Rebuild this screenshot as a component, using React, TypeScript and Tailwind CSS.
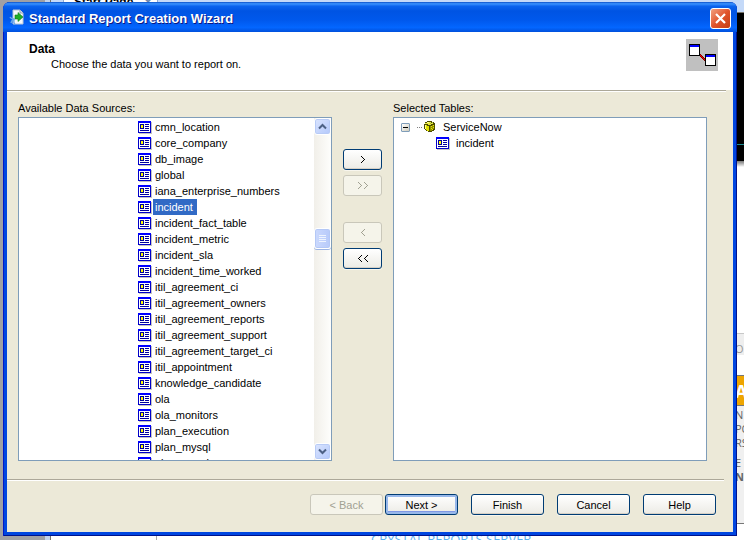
import React from "react";

const tables: string[] = [
  "cmn_location",
  "core_company",
  "db_image",
  "global",
  "iana_enterprise_numbers",
  "incident",
  "incident_fact_table",
  "incident_metric",
  "incident_sla",
  "incident_time_worked",
  "itil_agreement_ci",
  "itil_agreement_owners",
  "itil_agreement_reports",
  "itil_agreement_support",
  "itil_agreement_target_ci",
  "itil_appointment",
  "knowledge_candidate",
  "ola",
  "ola_monitors",
  "plan_execution",
  "plan_mysql",
  "plan_people",
];

function TableIcon() {
  return (
    <svg width="14" height="13" viewBox="0 0 14 13" shapeRendering="crispEdges" className="shrink-0" aria-hidden="true">
      <path d="M1 1h13v12H1z" fill="#c4c4c4" />
      <path d="M0 0h13v12H0z" fill="#0000c8" />
      <path d="M0 0h13v2H0z" fill="#0000ff" />
      <path d="M1 2h11v9H1z" fill="#fff" />
      <path d="M2 3h4v5H2zM7 3h4v1H7zM7 5h4v1H7zM7 7h4v1H7zM2 9h9v1H2z" fill="#00009c" />
      <path d="M3 4h2v3H3z" fill="#ffff00" />
    </svg>
  );
}

function DatabaseIcon() {
  return (
    <svg width="12" height="12" viewBox="0 0 12 12" shapeRendering="crispEdges" className="shrink-0" aria-hidden="true">
      <path d="M3 0h5v1h2v1h1v7h-1v1H8v1H4v-1H2V9H1V8H0V3h1V1h2z" fill="#4c4c00" />
      <path d="M3 1h4v1h2v1H7v1H4V3H1V2h2z" fill="#e8e840" />
      <path d="M1 4h2v1h2v5H3V9H2V8H1z" fill="#e0e000" />
      <path d="M1 4h1v4H1zM3 1h2v1H3z" fill="#ffff90" />
      <path d="M6 5h2V4h2v4H8v2H6z" fill="#909000" />
      <path d="M7 5h1v1H7zM9 4h1v1H9zM7 7h1v1H7zM9 6h1v1H9zM8 8h1v1H8z" fill="#e8e800" />
      <path d="M8 1h1v1H8zM6 2h1v1H6z" fill="#a8c040" />
    </svg>
  );
}

function ReportIcon() {
  return (
    <svg width="16" height="16" viewBox="0 0 16 16" className="shrink-0" aria-hidden="true">
      <path d="M4 1h7l3 3v11H4z" fill="#f6f8fb" stroke="#b9c6d8" />
      <path d="M11 1v3h3" fill="#dce6f2" stroke="#8c9cb4" />
      <path d="M6 6h3V3.500l5 4.500-5 4.500V10H6z" fill="#1fae2a" stroke="#0f7d1a" strokeWidth=".6" />
      <path d="M1 8c1 2 2 2 4 2M2 14c1-3 2-4 4-4M5 10c0 2-1 4 1 5" fill="none" stroke="#68a8e8" strokeWidth="1.500" />
    </svg>
  );
}

function LinkedTablesIcon() {
  return (
    <svg width="32" height="32" viewBox="0 0 32 32" shapeRendering="crispEdges" className="shrink-0" aria-hidden="true">
      <path d="M0 0h32v32H0z" fill="#c0c0c0" />
      <path d="M13 15h2v1h1v1h1v1h1v1h1v3h-1v-1h-1v-1h-1v-1h-1v-1h-1v-1h-1z" fill="#800000" />
      <path d="M14 16h1v1h1v1h1v1h1v1h1v1h-1v-1h-1v-1h-1v-1h-1v-1h-1z" fill="#f00000" />
      <path d="M3 5h11v12H3zM19 15h11v12H19z" fill="#000" />
      <path d="M4 6h9v10H4zM20 16h9v10H20z" fill="#fff" />
      <path d="M4 6h9v2H4zM20 16h9v2H20z" fill="#0000ff" />
    </svg>
  );
}

function ScrollButton({ up }: { up: boolean }) {
  return (
    <button
      type="button"
      aria-label={up ? "Scroll up" : "Scroll down"}
      className="flex h-[17px] w-[17px] items-center justify-center rounded-[3px] border border-white bg-gradient-to-br from-[#dbe5fe] to-[#b3c8fb] shadow-[inset_0_0_0_1px_#b8cbf6]"
    >
      <svg width="9" height="7" viewBox="0 0 9 7" fill="none" stroke="#4d6185" strokeWidth="2" aria-hidden="true">
        <path d={up ? "M1 5.500 4.500 2 8 5.500" : "M1 1.500 4.500 5 8 1.500"} />
      </svg>
    </button>
  );
}

function ScrollBar() {
  return (
    <div className="flex w-[17px] shrink-0 flex-col bg-gradient-to-r from-[#f1efe9] to-[#fefefc]">
      <ScrollButton up />
      <div className="flex min-h-0 flex-1 flex-col">
        <div className="grow-[93]" />
        <div className="flex h-[21px] shrink-0 flex-col items-center justify-center gap-px rounded-[3px] border border-white bg-gradient-to-r from-[#cbd9fd] to-[#b7cafa] shadow-[inset_0_0_0_1px_#b4c8f6,0_1px_0_#9cb4e4]">
          <span className="h-px w-[7px] bg-[#eef4fe]" />
          <span className="h-px w-[7px] bg-[#eef4fe]" />
          <span className="h-px w-[7px] bg-[#eef4fe]" />
          <span className="h-px w-[7px] bg-[#eef4fe]" />
        </div>
        <div className="grow-[194]" />
      </div>
      <ScrollButton up={false} />
    </div>
  );
}

type ButtonProps = {
  children: React.ReactNode;
  label?: string;
  disabled?: boolean;
  focused?: boolean;
  narrow?: boolean;
};

function XpButton({ children, label, disabled, focused, narrow }: ButtonProps) {
  const width = narrow ? "w-[39px]" : "w-[73px]";
  const look = disabled
    ? "border-[#c9c7ba] bg-[#f5f4ea] text-[#a1a192]"
    : focused
      ? "border-[#003c74] bg-gradient-to-b from-white to-[#ecebe5] text-black shadow-[inset_0_0_0_2px_#98b8ea,inset_0_-3px_0_#8098e4]"
      : "border-[#003c74] bg-gradient-to-b from-white to-[#ecebe5] text-black shadow-[inset_0_-1px_0_#d6d0c5,0_1px_0_#f8f6ee]";
  return (
    <button
      type="button"
      disabled={disabled}
      aria-label={label}
      className={`flex h-[21px] shrink-0 items-center justify-center rounded-[3px] border leading-4 ${width} ${look}`}
    >
      {children}
    </button>
  );
}

function Chevrons({ left, double }: { left?: boolean; double?: boolean }) {
  const single = left ? "M4 0h1v1H4zM3 1h1v1H3zM2 2h1v1H2zM1 3h1v1H1zM2 4h1v1H2zM3 5h1v1H3zM4 6h1v1H4z" : "M1 0h1v1H1zM2 1h1v1H2zM3 2h1v1H3zM4 3h1v1H4zM3 4h1v1H3zM2 5h1v1H2zM1 6h1v1H1z";
  return (
    <svg width={double ? 12 : 6} height="7" fill="currentColor" shapeRendering="crispEdges" aria-hidden="true">
      <path d={single} />
      {double && <path d={single} transform="translate(6 0)" />}
    </svg>
  );
}

function Backdrop() {
  return (
    <div aria-hidden="true" className="absolute inset-0 flex overflow-hidden bg-white">
      <div className="w-[45px] shrink-0 bg-[#a0a0a4]" />
      <div className="w-[6px] shrink-0 border-r border-[#77756c] bg-[#c3d3ea]" />
      <div className="flex min-w-0 flex-1 flex-col justify-between">
        <div className="flex h-3 overflow-hidden bg-[#c4d9f8]">
          <div className="ml-3 flex w-[95px] items-center justify-between border-x border-[#8ea9cf] bg-white pr-1 pl-[10px] font-['Liberation_Sans'] text-[12px] font-bold leading-[4px] text-black">
            <span className="-mt-[8px] whitespace-nowrap">Start Page</span>
            <span className="-mt-[8px] text-[#6d88ad]">✕</span>
          </div>
        </div>
        <div className="flex h-[5px] items-start">
          <div className="h-full w-[106px] shrink-0 border-r border-[#a8a8a8]" />
          <div className="ml-[214px] whitespace-nowrap font-['Open_Sans'] text-[13px] leading-[8px] text-[#5aaef0]">CRYSTAL REPORTS SERVER</div>
        </div>
      </div>
      <div className="flex w-[9px] shrink-0 flex-col overflow-hidden whitespace-nowrap font-['Open_Sans'] text-[11px] text-[#666]">
        <div className="h-3 shrink-0 bg-[#c4d9f8]" />
        <div className="h-[132px] shrink-0 border-t border-[#77756c] bg-black" />
        <div className="h-[17px] shrink-0 border-t border-[#1d8c94] bg-black" />
        <div className="h-[6px] shrink-0 bg-gradient-to-b from-[#777] to-white" />
        <div className="h-[166px] shrink-0 bg-white" />
        <div className="h-[22px] shrink-0 border-t border-[#c8c8c8] bg-[#eee] leading-[30px] text-[#999]">O</div>
        <div className="h-5 shrink-0 bg-white" />
        <div className="h-[31px] shrink-0 border-y border-[#777] bg-[#eea500] text-[18px] font-bold leading-[30px] text-white">A</div>
        <div className="flex-1 border-b border-[#777] bg-[#f0f0f0] leading-[14px]">
          <div className="mt-[2px]">N</div>
          <div>PO</div>
          <div>RS</div>
          <div className="mt-[6px]">E</div>
          <div className="font-bold">N</div>
        </div>
        <div className="h-4 shrink-0 bg-white" />
      </div>
    </div>
  );
}

export default function App() {
  return (
    <div className="relative flex h-screen min-h-[480px] overflow-hidden font-['Liberation_Sans',Arial,sans-serif] text-[11px] leading-4 text-black">
      <Backdrop />
      <section
        aria-label="Standard Report Creation Wizard"
        className="relative mt-[2px] mr-[7px] mb-[4px] ml-[3px] flex min-w-0 flex-1 flex-col rounded-t-[7px] bg-[#0046e0] px-1 pb-1 shadow-[inset_1px_0_0_#0019c8,inset_-1px_-1px_0_#00138c]"
      >
        <header className="-mx-1 flex h-[30px] shrink-0 items-center gap-1 rounded-t-[7px] bg-[linear-gradient(to_bottom,#0a50c8_0%,#3a93ff_6%,#0a63ee_14%,#0054e3_30%,#0058ec_60%,#0366ff_85%,#0050dc_100%)] pr-[6px] pl-[6px]">
          <ReportIcon />
          <h1 className="mt-[3px] flex-1 whitespace-nowrap text-[13px] font-bold leading-5 text-white [text-shadow:1px_1px_0_#0a1883]">
            Standard Report Creation Wizard
          </h1>
          <button
            type="button"
            aria-label="Close"
            className="mt-[3px] flex h-[21px] w-[21px] items-center justify-center rounded-[3px] border border-white bg-gradient-to-br from-[#f0a080] via-[#e0542c] to-[#c43c10]"
          >
            <svg width="11" height="11" viewBox="0 0 11 11" stroke="#fff" strokeWidth="2.200" aria-hidden="true">
              <path d="M1 1l9 9M10 1l-9 9" />
            </svg>
          </button>
        </header>

        <div className="flex h-[58px] shrink-0 items-start justify-between bg-white pt-[7px] pr-[15px] pl-[22px]">
          <div className="pt-[2px]">
            <h2 className="font-bold leading-4 text-[12px]">Data</h2>
            <p className="pl-[22px] leading-[14px]">Choose the data you want to report on.</p>
          </div>
          <LinkedTablesIcon />
        </div>

        <div className="flex min-h-0 flex-1 flex-col bg-[#ece9d8]">
          <div className="mr-[7px] h-[2px] shrink-0 border-t border-[#aca899] bg-white" />

          <div className="flex min-h-0 flex-1 pt-2 pr-[26px] pb-[18px] pl-[11px]">
            <div className="flex min-h-0 min-w-0 flex-1 flex-col gap-px">
              <h3 id="available">Available Data Sources:</h3>
              <div className="flex min-h-0 flex-1 border border-[#7f9db9] bg-white">
                <ul aria-labelledby="available" className="min-h-0 min-w-0 flex-1 overflow-hidden pt-px pl-[119px]">
                  {tables.map((name) => (
                    <li key={name} className="flex h-4 items-center gap-px whitespace-nowrap">
                      <TableIcon />
                      <span className={name === "incident" ? "bg-[#316ac5] pr-1 pl-[2px] text-white" : "pl-[2px]"}>{name}</span>
                    </li>
                  ))}
                </ul>
                <ScrollBar />
              </div>
            </div>

            <div className="flex w-[61px] shrink-0 flex-col items-center gap-[5px] pt-[49px]">
              <XpButton narrow label="Add">
                <Chevrons />
              </XpButton>
              <XpButton narrow disabled label="Add all">
                <Chevrons double />
              </XpButton>
              <div className="mt-[21px]">
                <XpButton narrow disabled label="Remove">
                  <Chevrons left />
                </XpButton>
              </div>
              <XpButton narrow label="Remove all">
                <Chevrons left double />
              </XpButton>
            </div>

            <div className="flex min-h-0 min-w-0 flex-1 flex-col gap-px">
              <h3 id="selected">Selected Tables:</h3>
              <ul aria-labelledby="selected" className="min-h-0 flex-1 overflow-hidden border border-[#7f9db9] bg-white pt-px pl-[7px]">
                <li>
                  <div className="flex h-4 items-center">
                    <button
                      type="button"
                      aria-label="Collapse"
                      className="flex h-[9px] w-[9px] items-center justify-center rounded-[1px] border border-[#7f9db9] bg-gradient-to-br from-white to-[#d0ccbc]"
                    >
                      <span className="h-px w-[5px] bg-black" />
                    </button>
                    <span className="mr-[2px] ml-[7px] w-[5px] border-t border-dotted border-[#808080]" />
                    <DatabaseIcon />
                    <span className="pl-[7px]">ServiceNow</span>
                  </div>
                  <ul>
                    <li className="flex h-4 items-center gap-[6px] pl-[35px]">
                      <TableIcon />
                      <span>incident</span>
                    </li>
                  </ul>
                </li>
              </ul>
            </div>
          </div>

          <div className="mr-[9px] h-[2px] shrink-0 border-t border-[#aca899] bg-white" />
          <footer className="flex shrink-0 justify-end gap-[13px] pt-[13px] pr-[17px] pb-[17px]">
            <div className="flex gap-[2px]">
              <XpButton disabled>&lt; Back</XpButton>
              <XpButton focused>Next &gt;</XpButton>
            </div>
            <XpButton>Finish</XpButton>
            <XpButton>Cancel</XpButton>
            <XpButton>Help</XpButton>
          </footer>
        </div>
      </section>
    </div>
  );
}
